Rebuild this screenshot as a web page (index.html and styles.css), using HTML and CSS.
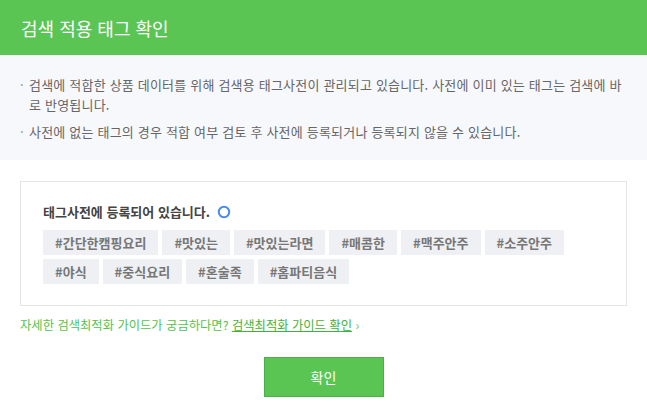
FILE: index.html
```html
<!DOCTYPE html>
<html lang="ko">
<head>
<meta charset="utf-8">
<title>검색 적용 태그 확인</title>
<link rel="stylesheet" href="styles.css">
</head>
<body>
<div class="dialog">
  <header class="dialog-header">
    <h1 class="dialog-title">검색 적용 태그 확인</h1>
  </header>
  <ul class="notice">
    <li class="notice-item">검색에 적합한 상품 데이터를 위해 검색용 태그사전이 관리되고 있습니다. 사전에 이미 있는 태그는 검색에 바로 반영됩니다.</li>
    <li class="notice-item">사전에 없는 태그의 경우 적합 여부 검토 후 사전에 등록되거나 등록되지 않을 수 있습니다.</li>
  </ul>
  <section class="tag-box">
    <p class="tag-box-title">태그사전에 등록되어 있습니다.
      <svg class="status-icon" width="14" height="14" viewBox="0 0 14 14" aria-hidden="true"><circle cx="7" cy="7" r="5.2" fill="none" stroke="#4a8bef" stroke-width="2"/></svg>
    </p>
    <ul class="tag-list">
      <li class="tag">#간단한캠핑요리</li>
      <li class="tag">#맛있는</li>
      <li class="tag">#맛있는라면</li>
      <li class="tag">#매콤한</li>
      <li class="tag">#맥주안주</li>
      <li class="tag">#소주안주</li>
      <li class="tag">#야식</li>
      <li class="tag">#중식요리</li>
      <li class="tag">#혼술족</li>
      <li class="tag">#홈파티음식</li>
    </ul>
  </section>
  <p class="guide">자세한 검색최적화 가이드가 궁금하다면? <a class="guide-link" href="#">검색최적화 가이드 확인</a> ›</p>
  <div class="actions">
    <button class="btn-confirm" type="button">확인</button>
  </div>
</div>
</body>
</html>
```
FILE: styles.css
```css
* { box-sizing: border-box; }
html, body { margin: 0; padding: 0; background: #fff; }
body {
  font-family: "Noto Sans CJK KR", "Noto Sans", sans-serif;
  color: #333;
}
.dialog { width: 647px; }
.dialog-header {
  height: 55px;
  background: #5ac553;
  display: flex;
  align-items: center;
  padding: 0 0 0 21px;
}
.dialog-title {
  margin: 0;
  font-size: 18px;
  font-weight: 400;
  color: #fff;
  line-height: 24px;
}
.notice {
  list-style: none;
  margin: 0;
  padding: 20px 20px 18px 20px;
  background: #f7f8fc;
  display: flex;
  flex-direction: column;
  gap: 7px;
}
.notice-item {
  font-size: 13px;
  letter-spacing: 0.2px;
  line-height: 20px;
  color: #666;
  padding-left: 9px;
  text-indent: -9px;
}
.notice-item::before {
  content: "·";
  display: inline-block;
  width: 9px;
  text-indent: 0;
  color: #888;
}
.tag-box {
  margin: 21px 20px 0;
  border: 1px solid #e4e5e9;
  padding: 20px 22px 21px;
}
.tag-box-title {
  margin: 0;
  font-size: 13px;
  font-weight: 700;
  line-height: 20px;
  color: #444;
  display: flex;
  align-items: center;
}
.status-icon { margin-left: 7px; }
.tag-list {
  list-style: none;
  margin: 8px 0 0;
  padding: 0;
  display: flex;
  flex-wrap: wrap;
  gap: 4px 4px;
}
.tag {
  height: 25px;
  line-height: 25px;
  padding: 0 12px;
  background: #eef0f3;
  font-size: 13px;
  font-weight: 700;
  color: #777;
}
.guide {
  margin: 9px 20px 0;
  font-size: 12.3px;
  line-height: 20px;
  color: #54c24d;
}
.guide-link {
  color: #3fb339;
  text-decoration: underline;
}
.actions {
  display: flex;
  justify-content: center;
  margin-top: 22px;
}
.btn-confirm {
  width: 120px;
  height: 40px;
  background: #5ac553;
  border: 1px solid #4cae47;
  color: #fff;
  font-family: inherit;
  font-size: 14px;
  padding: 0;
}
```
